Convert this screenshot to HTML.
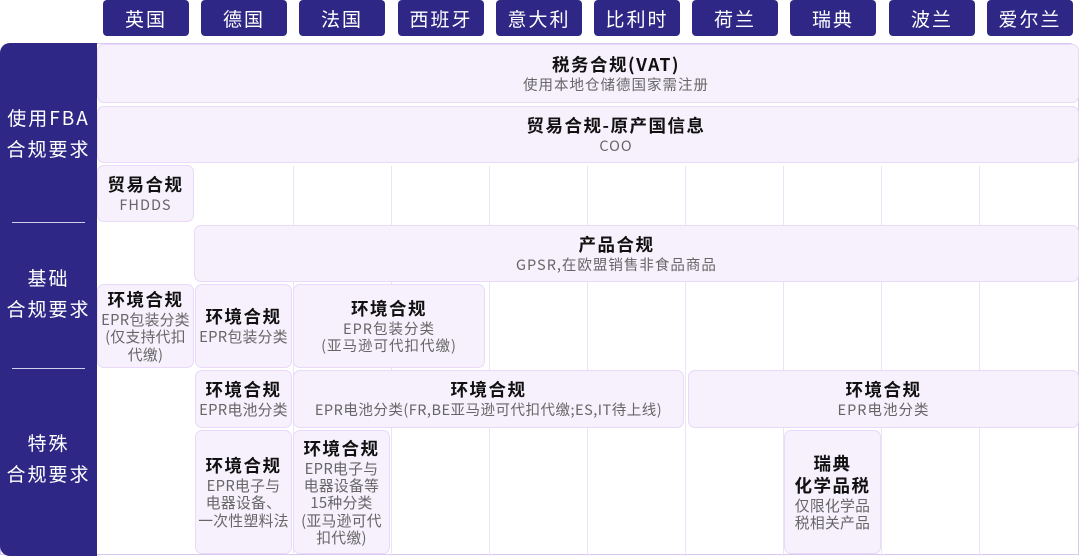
<!DOCTYPE html><html><head><meta charset="utf-8"><style>
body{margin:0;width:1080px;height:556px;background:#fff;position:relative;overflow:hidden;font-family:"Noto Sans CJK SC","Liberation Sans",sans-serif}
.h{position:absolute;top:0;height:36px;width:86px;background:#2e2785;color:#fff;border-radius:4px;font-size:19px;display:flex;align-items:center;justify-content:center;letter-spacing:2px}
.frame{position:absolute;left:0;top:43px;width:1079px;height:512px;border:1px solid #d8c8f0;border-radius:10px 10px 0 0;box-sizing:border-box}
.left{position:absolute;left:0;top:43px;width:97px;height:513px;background:#2e2785;border-radius:10px 0 0 10px}
.lab{position:absolute;left:0;width:97px;text-align:center;color:#fff;font-size:19px;line-height:31px;letter-spacing:2px}
.sep{position:absolute;left:12px;width:73px;height:1px;background:#cfd0ee}
.vl{position:absolute;top:166px;width:1px;height:390px;background:#ece4f6}
.c{position:absolute;background:#f7f1fd;border:1px solid #e8daf8;border-radius:7px;box-sizing:border-box;display:flex;flex-direction:column;align-items:center;justify-content:center;text-align:center}
.t{font-size:17.5px;font-weight:bold;color:#111;letter-spacing:1.5px;line-height:22px}
.s{font-size:14.5px;color:#666;line-height:17.3px;letter-spacing:1px}
.n{letter-spacing:.3px;font-size:14.8px}
</style></head><body>
<div class="h" style="left:103px">英国</div><div class="h" style="left:201px">德国</div><div class="h" style="left:299px">法国</div><div class="h" style="left:398px">西班牙</div><div class="h" style="left:496px">意大利</div><div class="h" style="left:594px">比利时</div><div class="h" style="left:692px">荷兰</div><div class="h" style="left:790px">瑞典</div><div class="h" style="left:889px">波兰</div><div class="h" style="left:987px">爱尔兰</div>
<div class="frame"></div>
<div class="vl" style="left:293px"></div><div class="vl" style="left:391px"></div><div class="vl" style="left:489px"></div><div class="vl" style="left:587px"></div><div class="vl" style="left:685px"></div><div class="vl" style="left:783px"></div><div class="vl" style="left:881px"></div><div class="vl" style="left:979px"></div>
<div class="left"></div>
<div class="lab" style="top:102px">使用FBA<br>合规要求</div>
<div class="sep" style="top:222px"></div>
<div class="lab" style="top:262px">基础<br>合规要求</div>
<div class="sep" style="top:368px"></div>
<div class="lab" style="top:427px">特殊<br>合规要求</div>
<div class="c" style="left:97px;top:44px;width:982px;height:59px;padding-left:56px"><div class="t">税务合规(VAT)</div><div class="s">使用本地仓储德国家需注册</div></div>
<div class="c" style="left:97px;top:106px;width:982px;height:57px;padding-left:56px"><div class="t">贸易合规-原产国信息</div><div class="s">COO</div></div>
<div class="c" style="left:97px;top:165px;width:97px;height:57px"><div class="t">贸易合规</div><div class="s">FHDDS</div></div>
<div class="c" style="left:194px;top:225px;width:885px;height:57px;padding-right:40px"><div class="t">产品合规</div><div class="s">GPSR,在欧盟销售非食品商品</div></div>
<div class="c" style="left:97px;top:284px;width:97px;height:84px"><div class="t">环境合规</div><div class="s n">EPR包装分类<br>(仅支持代扣<br>代缴)</div></div>
<div class="c" style="left:195px;top:284px;width:97px;height:84px"><div class="t">环境合规</div><div class="s n">EPR包装分类</div></div>
<div class="c" style="left:293px;top:284px;width:192px;height:84px"><div class="t">环境合规</div><div class="s">EPR包装分类<br>(亚马逊可代扣代缴)</div></div>
<div class="c" style="left:195px;top:370px;width:97px;height:58px"><div class="t">环境合规</div><div class="s n">EPR电池分类</div></div>
<div class="c" style="left:293px;top:370px;width:391px;height:58px"><div class="t">环境合规</div><div class="s" style="letter-spacing:.5px">EPR电池分类(FR,BE亚马逊可代扣代缴;ES,IT待上线)</div></div>
<div class="c" style="left:688px;top:370px;width:391px;height:58px"><div class="t">环境合规</div><div class="s">EPR电池分类</div></div>
<div class="c" style="left:195px;top:430px;width:97px;height:124px"><div class="t">环境合规</div><div class="s n">EPR电子与<br>电器设备、<br>一次性塑料法</div></div>
<div class="c" style="left:293px;top:430px;width:97px;height:124px"><div class="t">环境合规</div><div class="s n">EPR电子与<br>电器设备等<br>15种分类<br>(亚马逊可代<br>扣代缴)</div></div>
<div class="c" style="left:784px;top:430px;width:97px;height:124px"><div class="t">瑞典<br>化学品税</div><div class="s n">仅限化学品<br>税相关产品</div></div>
</body></html>
